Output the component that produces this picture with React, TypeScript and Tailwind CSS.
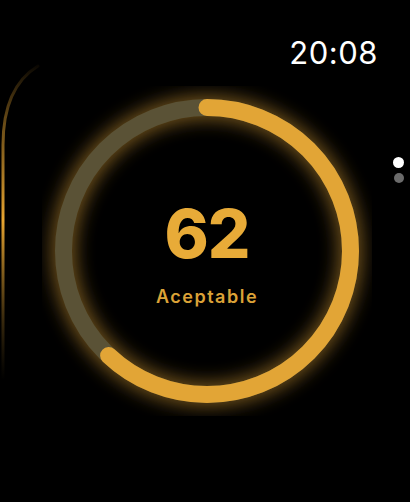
import type { FC } from 'react';

const SCORE = 62;
const R = 143.5;
const SIZE = 330;
const C = 2 * Math.PI * R;

const ScoreRing: FC<{ value: number }> = ({ value }) => {
  const dash = (value / 100) * C;
  return (
    <svg width={SIZE} height={SIZE} viewBox={`0 0 ${SIZE} ${SIZE}`} className="block">
      <defs>
        <filter id="glow" x="-20%" y="-20%" width="140%" height="140%">
          <feGaussianBlur stdDeviation="9" />
        </filter>
      </defs>
      {/* glow under the ring */}
      <circle
        cx={SIZE / 2}
        cy={SIZE / 2}
        r={R}
        fill="none"
        stroke="#e3a535"
        strokeOpacity={0.5}
        strokeWidth={24}
        filter="url(#glow)"
      />
      <circle cx={SIZE / 2} cy={SIZE / 2} r={R} fill="none" stroke="#5a5236" strokeWidth={17} />
      <circle
        cx={SIZE / 2}
        cy={SIZE / 2}
        r={R}
        fill="none"
        stroke="#e2a536"
        strokeWidth={17}
        strokeLinecap="round"
        strokeDasharray={`${dash} ${C}`}
        transform={`rotate(-90 ${SIZE / 2} ${SIZE / 2})`}
      />
    </svg>
  );
};

const EdgePeek: FC = () => (
  <svg width="60" height="400" viewBox="0 0 60 400" className="absolute left-0 top-0">
    <defs>
      <linearGradient id="edge" x1="0" y1="60" x2="0" y2="380" gradientUnits="userSpaceOnUse">
        <stop offset="0" stopColor="#e0a030" stopOpacity="0" />
        <stop offset="0.2" stopColor="#c08a2a" stopOpacity="0.55" />
        <stop offset="0.5" stopColor="#e8a530" stopOpacity="1" />
        <stop offset="0.8" stopColor="#b08028" stopOpacity="0.35" />
        <stop offset="1" stopColor="#806020" stopOpacity="0" />
      </linearGradient>
    </defs>
    <path d="M 38 66 C 15 80 3 105 3 145 L 3 378" fill="none" stroke="url(#edge)" strokeWidth="3" strokeLinecap="round" />
  </svg>
);

export default function App() {
  return (
    <div
      className="relative w-[410px] h-[502px] bg-black overflow-hidden flex flex-col"
      style={{ fontFamily: 'Inter, "Noto Sans", sans-serif' }}
    >
      <EdgePeek />

      <div className="h-[86px] flex justify-end items-start pt-[34px] pr-[32px]">
        <span className="text-white text-[31px] leading-[38px] font-normal tracking-[0.5px]">20:08</span>
      </div>

      <div className="flex justify-center pl-[4px]">
        <div className="relative">
          <ScoreRing value={SCORE} />
          <div className="absolute inset-0 flex flex-col items-center justify-center pt-[6px]">
            <span className="text-[#e8ab38] text-[67px] leading-[66px] font-extrabold tracking-[-1px]">{SCORE}</span>
            <span className="mt-[20px] text-[#dba237] text-[18px] leading-[20px] font-semibold tracking-[1.5px]">
              Aceptable
            </span>
          </div>
        </div>
      </div>

      <div className="absolute right-[6px] top-[157px] flex flex-col items-center gap-[5px]">
        <div className="w-[11px] h-[11px] rounded-full bg-white" />
        <div className="w-[10px] h-[10px] rounded-full bg-[#6b6b6b]" />
      </div>
    </div>
  );
}
